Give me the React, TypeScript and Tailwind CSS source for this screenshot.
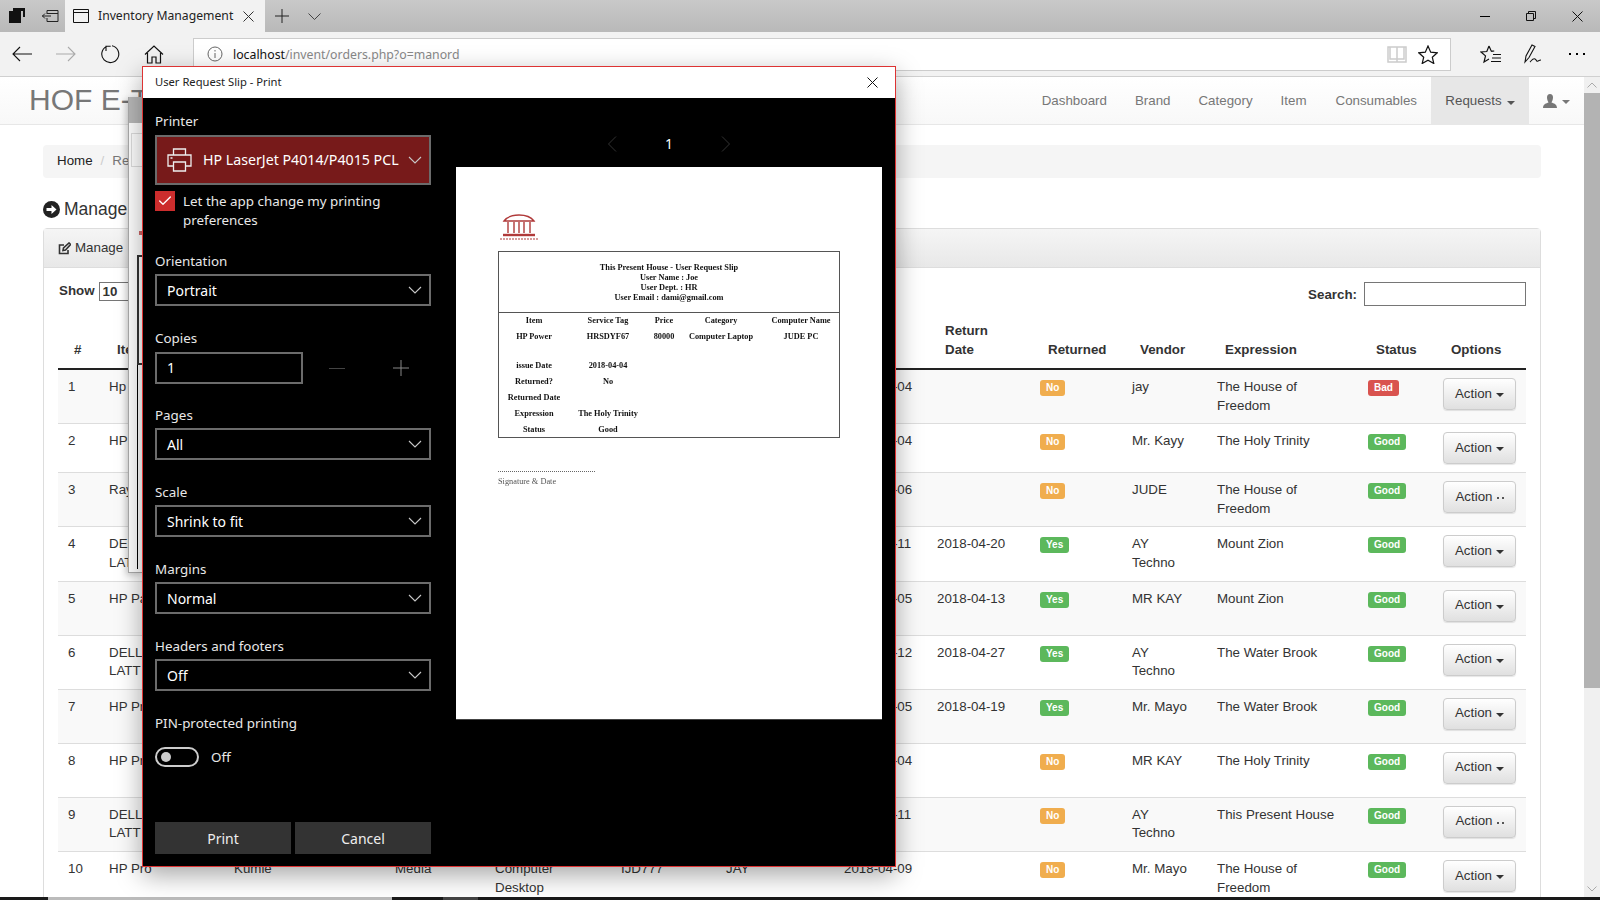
import React from 'react';
import { Check } from 'lucide-react';

// cells that sit fully under the print dialog are left empty
const rows = [
  { n: '1', item: 'Hp', date: '2018-04-04', ret: '', returned: 'No', vendor: 'jay', expr: 'The House of\nFreedom', status: 'Bad' },
  { n: '2', item: 'HP', date: '2018-04-04', ret: '', returned: 'No', vendor: 'Mr. Kayy', expr: 'The Holy Trinity', status: 'Good' },
  { n: '3', item: 'Ray', date: '2018-04-06', ret: '', returned: 'No', vendor: 'JUDE', expr: 'The House of\nFreedom', status: 'Good', thin: true },
  { n: '4', item: 'DELL\nLATT', date: '2018-04-11', ret: '2018-04-20', returned: 'Yes', vendor: 'AY\nTechno', expr: 'Mount Zion', status: 'Good' },
  { n: '5', item: 'HP Pa', date: '2018-04-05', ret: '2018-04-13', returned: 'Yes', vendor: 'MR KAY', expr: 'Mount Zion', status: 'Good' },
  { n: '6', item: 'DELL\nLATT', date: '2018-04-12', ret: '2018-04-27', returned: 'Yes', vendor: 'AY\nTechno', expr: 'The Water Brook', status: 'Good' },
  { n: '7', item: 'HP Pr', date: '2018-04-05', ret: '2018-04-19', returned: 'Yes', vendor: 'Mr. Mayo', expr: 'The Water Brook', status: 'Good' },
  { n: '8', item: 'HP Pr', date: '2018-04-04', ret: '', returned: 'No', vendor: 'MR KAY', expr: 'The Holy Trinity', status: 'Good' },
  { n: '9', item: 'DELL\nLATT', date: '2018-04-11', ret: '', returned: 'No', vendor: 'AY\nTechno', expr: 'This Present House', status: 'Good', thin: true },
  { n: '10', item: 'HP Pro', maker: 'Kumle', cat: 'Media', type: 'Computer\nDesktop', tag: 'IJD777', by: 'JAY', date: '2018-04-09', ret: '', returned: 'No', vendor: 'Mr. Mayo', expr: 'The House of\nFreedom', status: 'Good' },
];

function Chevron() {
  return (
    <svg width="14" height="8" viewBox="0 0 14 8" fill="none" stroke="#c8c8c8" strokeWidth="1.1">
      <path d="M1 1l6 6 6-6" />
    </svg>
  );
}

function Field({ label, value, gap }: { label: string; value: string; gap: string }) {
  return (
    <div className={gap}>
      <div className="h-5 leading-5 text-[13.4px] text-[#e8e8e8]">{label}</div>
      <div className="mt-[3px] h-8 w-[276px] border-2 border-[#6b6b6b] pl-[10px] pr-[7px] flex items-center justify-between text-white">
        <span>{value}</span>
        <Chevron />
      </div>
    </div>
  );
}

function Badge({ text }: { text: string }) {
  const color = text === 'No' ? 'bg-[#f0ad4e]' : text === 'Bad' ? 'bg-[#d9534f]' : 'bg-[#5cb85c]';
  return (
    <span className={`inline-block mt-[2px] h-4 leading-4 px-[6px] rounded-[3px] text-[10px] font-bold text-white ${color}`}>{text}</span>
  );
}

function ActionButton({ thin }: { thin?: boolean }) {
  return (
    <div className="w-[73px] h-8 rounded-[4px] border border-[#ccc] shadow-[0_1px_1px_rgba(0,0,0,0.1)] bg-gradient-to-b from-white to-[#e0e0e0] flex items-center justify-center gap-[4px] text-[#333]">
      <span>Action</span>
      {thin ? (
        <span className="w-[7px] h-[2px] border-x-2 border-[#555] mt-[2px]" />
      ) : (
        <span className="w-0 h-0 mt-[2px] border-x-[4px] border-x-transparent border-t-[4px] border-t-[#333]" />
      )}
    </div>
  );
}

function TabBar() {
  return (
    <div className="h-8 flex items-stretch bg-gradient-to-b from-[#c9c9c9] to-[#b9b9b9] text-black">
      <div className="w-[65px] flex items-center pl-[8px] gap-[16px]">
        <svg width="18" height="16" viewBox="0 0 18 16" fill="#111">
          <path d="M5 0h12v9h-2V3H5z" />
          <path d="M1 3h12v12H1z" />
        </svg>
        <svg width="17" height="12" viewBox="0 0 17 12" fill="none" stroke="#222" strokeWidth="1">
          <path d="M5 .5h11v11H5V8M5 4V.5M0 6h9M3 3.5L.5 6 3 8.5M5 3.5h11" />
        </svg>
      </div>
      <div className="w-[200px] bg-[#f2f2f2] flex items-center pl-[8px]">
        <svg width="16" height="14" viewBox="0 0 16 14" fill="none" stroke="#111">
          <path d="M.5.5h15v13H.5zM.5 3.5h15" />
        </svg>
        <span className="ml-[9px] w-[135px] text-[12.2px] text-[#222] whitespace-nowrap">Inventory Management</span>
        <svg className="ml-[10px]" width="11" height="11" viewBox="0 0 11 11" stroke="#333">
          <path d="M.5.5l10 10M10.500.5l-10 10" />
        </svg>
      </div>
      <div className="flex items-center pl-[10px] gap-[19px]">
        <svg width="14" height="14" viewBox="0 0 14 14" stroke="#222">
          <path d="M7 0v14M0 7h14" />
        </svg>
        <svg width="13" height="7" viewBox="0 0 13 7" fill="none" stroke="#444">
          <path d="M.5.500l6 6 6-6" />
        </svg>
      </div>
      <div className="ml-auto flex items-center">
        <div className="w-[46px] flex justify-center">
          <div className="w-[10px] h-px bg-black" />
        </div>
        <div className="w-[46px] flex justify-center">
          <svg width="10" height="10" viewBox="0 0 10 10" fill="none" stroke="#111">
            <path d="M.5 2.500h7v7h-7zM2.500 2.500v-2h7v7h-2" />
          </svg>
        </div>
        <div className="w-[46px] flex justify-center">
          <svg width="11" height="11" viewBox="0 0 11 11" stroke="#111">
            <path d="M.5.500l10 10M10.500.500l-10 10" />
          </svg>
        </div>
      </div>
    </div>
  );
}

function Toolbar() {
  return (
    <div className="h-[45px] bg-[#f2f2f2] flex items-center border-b border-[#d0d0d0]">
      <div className="w-[193px] flex items-center pl-[12px] gap-[24px]">
        <svg width="20" height="16" viewBox="0 0 20 16" fill="none" stroke="#111" strokeWidth="1.1">
          <path d="M20 8H1M8 1L1 8l7 7" />
        </svg>
        <svg width="20" height="16" viewBox="0 0 20 16" fill="none" stroke="#aaa" strokeWidth="1.1">
          <path d="M0 8h19M12 1l7 7-7 7" />
        </svg>
        <svg width="20" height="20" viewBox="0 0 20 20" fill="none" stroke="#111" strokeWidth="1.1">
          <path d="M6.500 2.500A8.500 8.500 0 1 0 12 1.800M6 7V2.300h4.700" />
        </svg>
        <svg width="20" height="19" viewBox="0 0 20 19" fill="none" stroke="#111" strokeWidth="1.2">
          <path d="M1 9.500L10 1l9 8.500M3.500 8v10h4.500v-6h4v6h4.500V8" />
        </svg>
      </div>
      <div className="w-[1258px] h-[33px] bg-white border border-[#ccc] flex items-center pl-[13px] text-[12.3px]">
        <svg width="16" height="16" viewBox="0 0 16 16" fill="none" stroke="#666">
          <circle cx="8" cy="8" r="7" />
          <path d="M8 7v5M8 4v1.500" />
        </svg>
        <span className="ml-[10px] pt-[2px] text-[#111]">localhost</span>
        <span className="pt-[2px] text-[#888]">/invent/orders.php?o=manord</span>
        <svg className="ml-auto" width="20" height="17" viewBox="0 0 20 17" fill="none" stroke="#ccc" strokeWidth="1.5">
          <path d="M1 1h18v15H1zM10 1v15M3 1v12h7M17 1v12h-7" />
        </svg>
        <svg className="ml-[11px] mr-[12px]" width="20" height="19" viewBox="0 0 20 19" fill="none" stroke="#111" strokeWidth="1.2">
          <path d="M10 1l2.700 6.200 6.600.6-5 4.400 1.500 6.300L10 15.200 4.200 18.500l1.500-6.300-5-4.400 6.600-.6z" />
        </svg>
      </div>
      <div className="flex-1 flex items-center pl-[29px]">
        <svg width="21" height="19" viewBox="0 0 21 19" fill="none" stroke="#111" strokeWidth="1.2">
          <path d="M9 1l2.200 5h3l-3 .5M13 9.500h8M12 13h9M11 16.500h10M9 1L6.800 6.500 1 7l4.500 3.900L4 17l5-3" />
        </svg>
        <svg className="ml-[23px]" width="18" height="20" viewBox="0 0 18 20" fill="none" stroke="#111" strokeWidth="1.1">
          <path d="M1 18l1-6 6-11 3 1.500-6 11zM6 18c2-2 3-4 5-3s1 3 3 2 2-1 3-1" />
        </svg>
        <div className="ml-[27px] flex gap-[5px]">
          <div className="w-[2px] h-[2px] bg-black" />
          <div className="w-[2px] h-[2px] bg-black" />
          <div className="w-[2px] h-[2px] bg-black" />
        </div>
      </div>
    </div>
  );
}

function PageBehind() {
  return (
    <div className="flex-1 min-w-0 overflow-hidden text-[13.33px] leading-[18.6px] text-[#333]">
      <nav className="h-[48px] bg-gradient-to-b from-white to-[#f8f8f8] border-b border-[#e7e7e7] flex items-stretch">
        <div className="pl-[29px] text-[30px] leading-[46px] text-[#777]">HOF E-T</div>
        <div className="ml-auto flex items-stretch text-[#777]">
          {['Dashboard', 'Brand', 'Category', 'Item', 'Consumables'].map((t) => (
            <div key={t} className={`pl-[14px] pt-[2px] flex items-center ${t === 'Item' ? 'pr-[15px]' : 'pr-[14px]'}`}>{t}</div>
          ))}
          <div className="w-[98px] pt-[2px] bg-[#e7e7e7] text-[#555] flex items-center justify-center gap-[5px]">
            Requests
            <span className="w-0 h-0 mt-[2px] border-x-[4px] border-x-transparent border-t-[4px] border-t-[#555]" />
          </div>
          <div className="w-[55px] pl-[14px] flex items-center gap-[5px]">
            <svg width="14" height="14" viewBox="0 0 14 14" fill="#777">
              <path d="M7 0c2 0 3 1.500 3 3.500S9 7.500 8.500 8.500c2 .8 5.500 1.500 5.500 5.500H0c0-4 3.500-4.700 5.500-5.500C5 7.500 4 5.500 4 3.500S5 0 7 0z" />
            </svg>
            <span className="w-0 h-0 mt-[2px] border-x-[4px] border-x-transparent border-t-[4px] border-t-[#777]" />
          </div>
        </div>
      </nav>

      <div className="px-[43px]">
        <div className="mt-5 h-[33px] rounded-[4px] bg-[#f5f5f5] pl-[14px] flex items-center">
          <span className="text-[#222]">Home</span>
          <span className="mx-[8px] text-[#ccc]">/</span>
          <span className="text-[#777]">Re</span>
        </div>

        <div className="mt-[21px] h-[20px] flex items-center text-[17.5px] text-[#333]">
          <svg width="17" height="17" viewBox="0 0 17 17">
            <circle cx="8.500" cy="8.500" r="8.500" fill="#222" />
            <path d="M3.500 7h5V4l5 4.500-5 4.500v-3h-5z" fill="#fff" />
          </svg>
          <span className="ml-[4px]">Manage</span>
        </div>

        <div className="mt-[9px] border border-[#ddd] rounded-t-[4px]">
          <div className="h-[39px] bg-gradient-to-b from-[#f5f5f5] to-[#e8e8e8] border-b border-[#ddd] pl-[14px] flex items-center gap-[4px]">
            <svg width="13" height="13" viewBox="0 0 13 13" fill="none" stroke="#333" strokeWidth="1.6">
              <path d="M10 8v3.500H1.500V3H6M5 8.500l.5-2.500 5.500-5 1.500 1.500L7.500 8z" />
            </svg>
            <span>Manage</span>
          </div>

          <div className="pl-[15px] pr-[14px] pt-[14px]">
            <div className="h-6 flex items-center justify-between">
              <div className="flex items-center font-bold mb-[5px]">
                Show
                <div className="ml-[4px] w-[40px] h-[19px] border border-[#767676] pl-[3px] leading-[17px]">10</div>
              </div>
              <div className="flex items-center font-bold">
                <span className="pt-[2px]">Search:</span>
                <div className="ml-[7px] w-[162px] h-6 border border-[#767676]" />
              </div>
            </div>

            <table className="mt-[15px] -ml-px w-[1468px] table-fixed border-collapse">
              <thead>
                <tr className="h-[48px] border-b-2 border-[#222] font-bold text-left align-bottom leading-[19px]">
                  <th className="w-[43px] pl-4 pb-[9px]">#</th>
                  <th className="w-[125px] pl-4 pb-[9px]">Ite</th>
                  <th className="w-[161px]" />
                  <th className="w-[100px]" />
                  <th className="w-[126px]" />
                  <th className="w-[105px]" />
                  <th className="w-[118px]" />
                  <th className="w-[93px]" />
                  <th className="w-[103px] pl-4 pb-[9px]">Return<br />Date</th>
                  <th className="w-[92px] pl-4 pb-[9px]">Returned</th>
                  <th className="w-[85px] pl-4 pb-[9px]">Vendor</th>
                  <th className="w-[151px] pl-4 pb-[9px]">Expression</th>
                  <th className="w-[75px] pl-4 pb-[9px]">Status</th>
                  <th className="w-[91px] pl-4 pb-[9px]">Options</th>
                </tr>
              </thead>
              <tbody>
                {rows.map((r, i) => (
                  <tr key={r.n} className={`border-b border-[#ddd] align-top whitespace-pre-line ${r.n === '2' ? 'h-[49px]' : 'h-[54px]'} ${i % 2 === 0 ? 'bg-[#f9f9f9]' : 'bg-white'}`}>
                    <td className="pl-[10px] py-2">{r.n}</td>
                    <td className="pl-2 py-2">{r.item}</td>
                    <td className="pl-2 py-2">{r.maker}</td>
                    <td className="pl-2 py-2">{r.cat}</td>
                    <td className="pl-2 py-2">{r.type}</td>
                    <td className="pl-2 py-2">{r.tag}</td>
                    <td className="pl-2 py-2">{r.by}</td>
                    <td className="pl-2 py-2 whitespace-nowrap">{r.date}</td>
                    <td className="pl-2 py-2">{r.ret}</td>
                    <td className="pl-2 py-2"><Badge text={r.returned} /></td>
                    <td className="pl-2 py-2">{r.vendor}</td>
                    <td className="pl-2 py-2">{r.expr}</td>
                    <td className="pl-2 py-2"><Badge text={r.status} /></td>
                    <td className="pl-2 py-2"><ActionButton thin={r.thin} /></td>
                  </tr>
                ))}
              </tbody>
            </table>
          </div>
        </div>
      </div>
    </div>
  );
}

function Scrollbar() {
  return (
    <div className="w-4 bg-[#f0f0f0] flex flex-col">
      <div className="h-4 flex items-center justify-center">
        <svg width="10" height="6" viewBox="0 0 10 6" fill="none" stroke="#aaa">
          <path d="M.5 5.500l4.500-4.500 4.500 4.500" />
        </svg>
      </div>
      <div className="h-[595px] bg-[#b3b3b3]" />
      <div className="mt-auto h-4 flex items-center justify-center">
        <svg width="10" height="6" viewBox="0 0 10 6" fill="none" stroke="#aaa">
          <path d="M.5.500l4.500 4.500 4.500-4.500" />
        </svg>
      </div>
    </div>
  );
}

function SlipPreview() {
  return (
    <div className="w-[426px] h-[552px] bg-white shadow-[0_1px_0_#444] pt-[45px] pl-[42px] text-[#111] font-['Liberation_Serif',serif] text-[8.3px] leading-[10px] font-bold blur-[0.3px]">
      <svg className="ml-[1px]" width="40" height="28" viewBox="0 0 40 28" fill="none" stroke="#b03a3a">
        <path d="M5 9c6-8 24-8 30 0H5zM9 10v11M15 10v11M20 10v11M25 10v11M31 10v11" strokeWidth="1.4" />
        <path d="M4 23h32" strokeWidth="2.400" />
        <path d="M1 27h38" strokeWidth="1.200" strokeDasharray="2 1" />
      </svg>
      <div className="mt-[11px] w-[342px] h-[187px] border border-[#555]">
        <div className="h-[61px] border-b border-[#555] pt-[11px] text-center">
          <div>This Present House - User Request Slip</div>
          <div>User Name : Joe</div>
          <div>User Dept. : HR</div>
          <div>User Email : dami@gmail.com</div>
        </div>
        <div className="grid grid-cols-[70px_78px_34px_80px_80px] auto-rows-[16px] items-center text-center whitespace-nowrap">
          <div>Item</div><div>Service Tag</div><div>Price</div><div>Category</div><div>Computer Name</div>
          <div>HP Power</div><div>HRSDYF67</div><div>80000</div><div>Computer Laptop</div><div>JUDE PC</div>
        </div>
        <div className="mt-[13px] grid grid-cols-[70px_78px] auto-rows-[16px] items-center text-center whitespace-nowrap">
          <div>issue Date</div><div>2018-04-04</div>
          <div>Returned?</div><div>No</div>
          <div>Returned Date</div><div />
          <div>Expression</div><div>The Holy Trinity</div>
          <div>Status</div><div>Good</div>
        </div>
      </div>
      <div className="mt-[33px] w-[97px] border-t border-dotted border-[#666]" />
      <div className="mt-[5px] font-normal text-[#555]">Signature &amp; Date</div>
    </div>
  );
}

function PrintDialog() {
  return (
    <div className="absolute left-[142px] top-[66px] w-[754px] h-[801px] border border-[#d33] bg-black flex flex-col shadow-[0_8px_24px_rgba(0,0,0,0.35)] font-['Noto_Sans',sans-serif] text-[14px]">
      <div className="h-[31px] bg-white flex items-center justify-between pl-[12px] pr-[17px] text-[11.2px] text-[#222]">
        <span>User Request Slip - Print</span>
        <svg width="11" height="11" viewBox="0 0 11 11" stroke="#111">
          <path d="M.5.500l10 10M10.500.500l-10 10" />
        </svg>
      </div>
      <div className="flex-1 flex min-h-0">
        <div className="w-[301px] pl-3 pt-[13px]">
          <div className="h-5 leading-5 text-[13.4px] text-[#e8e8e8]">Printer</div>
          <div className="mt-1 h-[50px] w-[276px] border-2 border-[#6b6b6b] bg-[#771a1a] flex items-center pl-[10px] pr-[7px] text-white">
            <svg width="25" height="24" viewBox="0 0 25 24" fill="none" stroke="#eee" strokeWidth="1.3">
              <path d="M6.500 7V1h12v6M6 18H1V7h23v11h-5M6.500 14h12v9h-12zM3.500 10h2" />
            </svg>
            <span className="ml-[11px] text-[14.2px] whitespace-nowrap">HP LaserJet P4014/P4015 PCL</span>
            <span className="ml-auto"><Chevron /></span>
          </div>
          <div className="mt-[6px] flex">
            <div className="w-5 h-5 bg-[#cc2d2d] flex items-center justify-center">
              <Check size={16} color="#fff" strokeWidth={2} />
            </div>
            <div className="ml-2 pt-px w-[220px] text-[13.4px] leading-[19px] text-[#e8e8e8]">Let the app change my printing preferences</div>
          </div>
          <Field gap="mt-[21px]" label="Orientation" value="Portrait" />
          <div className="mt-[22px]">
            <div className="h-5 leading-5 text-[13.4px] text-[#e8e8e8]">Copies</div>
            <div className="mt-1 flex items-center">
              <div className="w-[148px] h-8 border-2 border-[#6b6b6b] pl-[10px] leading-7 text-white">1</div>
              <div className="ml-[26px] w-4 h-px bg-[#444]" />
              <svg className="ml-12" width="16" height="16" viewBox="0 0 16 16" stroke="#888">
                <path d="M8 0v16M0 8h16" />
              </svg>
            </div>
          </div>
          <Field gap="mt-[21px]" label="Pages" value="All" />
          <Field gap="mt-[22px]" label="Scale" value="Shrink to fit" />
          <Field gap="mt-[22px]" label="Margins" value="Normal" />
          <Field gap="mt-[22px]" label="Headers and footers" value="Off" />
          <div className="mt-[22px] h-5 leading-5 text-[13.4px] text-[#e8e8e8]">PIN-protected printing</div>
          <div className="mt-[14px] h-5 flex items-center text-[13.4px] text-[#e8e8e8]">
            <div className="w-[44px] h-5 rounded-full border-2 border-[#ccc] flex items-center pl-[4px]">
              <div className="w-[10px] h-[10px] rounded-full bg-[#ccc]" />
            </div>
            <span className="ml-3">Off</span>
          </div>
          <div className="mt-[55px] flex gap-1 text-[#eee]">
            <div className="w-[136px] h-8 bg-[#333] flex items-center justify-center">Print</div>
            <div className="w-[136px] h-8 bg-[#333] flex items-center justify-center">Cancel</div>
          </div>
        </div>
        <div className="flex-1 pl-3 flex flex-col">
          <div className="h-[69px] w-[426px] flex items-center justify-center gap-[48px] pt-[22px] text-white">
            <svg width="10" height="16" viewBox="0 0 10 16" fill="none" stroke="#333">
              <path d="M9 .500L1.500 8 9 15.500" />
            </svg>
            <span className="w-2 text-center">1</span>
            <svg width="10" height="16" viewBox="0 0 10 16" fill="none" stroke="#333">
              <path d="M1 .500L8.500 8 1 15.500" />
            </svg>
          </div>
          <SlipPreview />
        </div>
      </div>
    </div>
  );
}

function WindowBehind() {
  return (
    <div className="absolute left-[128px] top-[97px] w-[16px] h-[476px] bg-white border-l border-b border-[#aaa] shadow-[-2px_2px_6px_rgba(0,0,0,0.2)]">
      <div className="h-[26px] bg-[#b8b8b8]" />
      <div className="mt-[10px] ml-[2px] h-[34px] border border-[#ddd] bg-white" />
      <div className="mt-[64px] ml-[10px] w-[4px] h-[4px] bg-[#c66]" />
      <div className="mt-[20px] ml-[8px] h-[110px] border-l-2 border-t-2 border-b-2 border-[#333]" />
      <div className="ml-[8px] h-[204px] border-l border-black" />
    </div>
  );
}

export default function App() {
  return (
    <div className="relative w-[1600px] h-[900px] overflow-hidden bg-white font-['Liberation_Sans',Arial,sans-serif]">
      <div className="font-['Noto_Sans',sans-serif]">
        <TabBar />
        <Toolbar />
      </div>
      <div className="h-[820px] flex">
        <PageBehind />
        <Scrollbar />
      </div>
      <div className="h-[3px] flex bg-[#1a1a1a]">
        <div className="ml-[48px] w-[344px] bg-[#bbb]" />
        <div className="ml-[51px] w-[35px] bg-[#444]" />
      </div>
      <WindowBehind />
      <PrintDialog />
    </div>
  );
}
